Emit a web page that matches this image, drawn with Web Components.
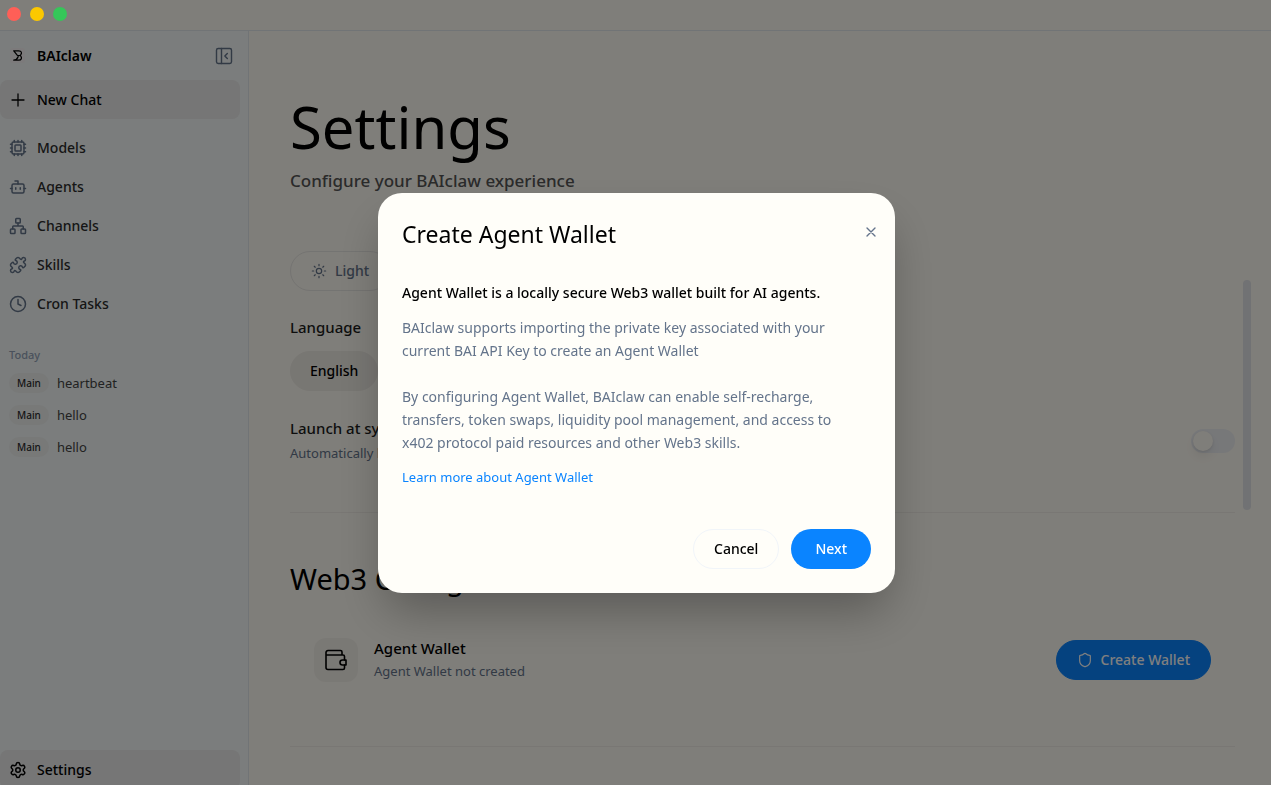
<!DOCTYPE html>
<html lang="en">
<head>
<meta charset="utf-8">
<meta name="viewport" content="width=device-width, initial-scale=1">
<title>BAIclaw</title>
<style>
  :root {
    --page: #fffcf4;
    --surface: #fffef9;
    --sidebar: #f6fbfa;
    --active: #ececec;
    --line: #e2e8ec;
    --ink: #000;
    --text: #2c2c2c;
    --muted: #64748b;
    --blue: #0a84ff;
  }
  body { margin: 0; overflow: hidden; background: var(--page); color: var(--ink);
    font: 500 14px/20px "Noto Sans", "Open Sans", sans-serif; }
</style>
</head>
<body>
<app-window></app-window>
<script>
const ICONS = {
  panel: '<rect x="3" y="3" width="18" height="18" rx="2"/><path d="M9 3v18M16 15l-3-3 3-3"/>',
  plus: '<path d="M4 12h16M12 4v16"/>',
  models: '<rect x="4" y="4" width="16" height="16" rx="2"/><rect x="8" y="8" width="8" height="8" rx="1"/><path d="M12 2v2M7 2v2M17 2v2M12 20v2M7 20v2M17 20v2M2 12h2M2 7h2M2 17h2M20 12h2M20 7h2M20 17h2"/>',
  agents: '<path d="M12 8V4H8"/><rect x="4" y="8" width="16" height="12" rx="2"/><path d="M2 14h2M20 14h2M15 13v2M9 13v2"/>',
  channels: '<rect x="16" y="16" width="6" height="6" rx="1"/><rect x="2" y="16" width="6" height="6" rx="1"/><rect x="9" y="2" width="6" height="6" rx="1"/><path d="M5 16v-3a1 1 0 0 1 1-1h12a1 1 0 0 1 1 1v3M12 12V8"/>',
  skills: '<path d="M15.39 4.39a1 1 0 0 0 1.68-.474 2.5 2.5 0 1 1 3.014 3.015 1 1 0 0 0-.474 1.68l1.683 1.682a2.414 2.414 0 0 1 0 3.414L19.61 15.39a1 1 0 0 1-1.68-.474 2.5 2.5 0 1 0-3.014 3.015 1 1 0 0 1 .474 1.68l-1.683 1.682a2.414 2.414 0 0 1-3.414 0L8.61 19.61a1 1 0 0 0-1.68.474 2.5 2.5 0 1 1-3.014-3.015 1 1 0 0 0 .474-1.68l-1.683-1.682a2.414 2.414 0 0 1 0-3.414L4.39 8.61a1 1 0 0 1 1.68.474 2.5 2.5 0 1 0 3.014-3.015 1 1 0 0 1-.474-1.68l1.683-1.682a2.414 2.414 0 0 1 3.414 0z"/>',
  clock: '<circle cx="12" cy="12" r="10"/><path d="M12 6v6l4 2"/>',
  settings: '<path d="M9.671 4.136a2.34 2.34 0 0 1 4.659 0 2.34 2.34 0 0 0 3.319 1.915 2.34 2.34 0 0 1 2.33 4.033 2.34 2.34 0 0 0 0 3.831 2.34 2.34 0 0 1-2.33 4.033 2.34 2.34 0 0 0-3.319 1.915 2.34 2.34 0 0 1-4.659 0 2.34 2.34 0 0 0-3.32-1.915 2.34 2.34 0 0 1-2.33-4.033 2.34 2.34 0 0 0 0-3.831A2.34 2.34 0 0 1 6.35 6.051a2.34 2.34 0 0 0 3.319-1.915"/><circle cx="12" cy="12" r="3"/>',
  sun: '<circle cx="12" cy="12" r="4"/><path d="M12 2v2M12 20v2M4.93 4.93l1.41 1.41M17.66 17.66l1.41 1.41M2 12h2M20 12h2M6.34 17.66l-1.41 1.41M19.07 4.93l-1.41 1.41"/>',
  shield: '<path d="M20 13c0 5-3.5 7.5-7.66 8.95a1 1 0 0 1-.67-.01C7.5 20.5 4 18 4 13V6a1 1 0 0 1 1-1c2 0 4.500-1.200 6.240-2.720a1.170 1.170 0 0 1 1.520 0C14.510 3.810 17 5 19 5a1 1 0 0 1 1 1z"/>',
  wallet: '<path d="M18 7V4a1.500 1.500 0 0 0-1.500-1.500H4A2 2 0 0 0 2 4.500V19.500a2 2 0 0 0 2 2H19a1.500 1.500 0 0 0 1.500-1.500V17M2 7H19a1.500 1.500 0 0 1 1.500 1.500V12"/><path d="M22 12H18.500a2.500 2.500 0 0 0 0 5H22z"/>',
  close: '<path d="M18 6 6 18M6 6l12 12"/>',
  logo: '<rect width="24" height="24" rx="4" fill="#f8f5f6" stroke="none"/><path d="M6 4.500h8c4.500 0 5.500 3.500 3 6.500-1.500 1.500-3.500 1.500-5.500.5L6 4.500M6 19.500h8c4.500 0 5.500-4 3-7M6 19.500c3.500-.5 6-2.500 7-5.500"/>'
};

function define(name, html) {
  const template = document.createElement('template');
  template.innerHTML = html;
  customElements.define(name, class extends HTMLElement {
    constructor() {
      super();
      this.attachShadow({ mode: 'open' }).append(template.content.cloneNode(true));
    }
  });
}

customElements.define('app-icon', class extends HTMLElement {
  connectedCallback() {
    if (this.shadowRoot) return;
    this.attachShadow({ mode: 'open' }).innerHTML = `
      <style>
        :host { display: block; flex: none; width: var(--icon, 18px); height: var(--icon, 18px); }
        svg { display: block; width: 100%; height: 100%; fill: none; stroke: currentColor;
          stroke-width: var(--stroke, 2); stroke-linecap: round; stroke-linejoin: round; }
      </style>
      <svg viewBox="0 0 24 24" aria-hidden="true">${ICONS[this.getAttribute('name')]}</svg>`;
  }
});

define('title-bar', `
  <style>
    :host { display: flex; align-items: center; height: 30px; padding: 0 7px; border-bottom: 1px solid var(--line); }
    div { display: flex; gap: 9px; position: relative; z-index: 2; padding-bottom: 2px; }
    button { width: 14px; height: 14px; padding: 0; border: 0; border-radius: 50%; background: #ff5f57; }
    .min { background: #fcc800; }
    .max { background: #34c759; }
  </style>
  <div>
    <button aria-label="Close window"></button>
    <button class="min" aria-label="Minimize window"></button>
    <button class="max" aria-label="Zoom window"></button>
  </div>`);

define('nav-item', `
  <style>
    :host { display: block; }
    a { display: flex; align-items: center; gap: 10px; height: 39px; padding: 0 9px;
      border-radius: 8px; color: var(--text); text-decoration: none; }
    slot[name="icon"] { color: var(--muted); }
    :host([active]) a { background: var(--active); color: var(--ink); }
    :host([active]) slot[name="icon"] { color: var(--ink); }
  </style>
  <a href="#"><slot name="icon"></slot><slot></slot></a>`);

define('session-item', `
  <style>
    :host { display: block; }
    a { display: flex; align-items: center; gap: 8px; height: 32px; padding: 0 9px;
      color: #444; font-weight: 400; font-size: 13px; text-decoration: none; }
    span { padding: 0 8px; border-radius: 10px; background: #f0f2f1; color: var(--text); font-size: 10px; font-weight: 500; }
  </style>
  <a href="#"><span>Main</span><slot></slot></a>`);

define('app-sidebar', `
  <style>
    :host { display: flex; flex-direction: column; box-sizing: border-box; padding: 0 8px 0 0;
      background: var(--sidebar); border-right: 1px solid var(--line); }
    header { display: flex; align-items: center; height: 49px; padding: 0 6px 0 10px; }
    header app-icon { --icon: 15px; }
    header b { flex: 1; padding-left: 12px; font-weight: 600; }
    header button { padding: 0; border: 0; background: none; color: var(--muted); }
    header button app-icon { --icon: 20px; --stroke: 1.7; }
    nav { display: flex; flex-direction: column; }
    .new { margin-bottom: 9px; --stroke: 1.7; }
    h2 { margin: 22px 0 2px; padding: 0 9px; color: #94a3b8; font-size: 11px; font-weight: 500; line-height: 20px; }
    .foot { margin: auto 0 -4px; }
  </style>
  <header>
    <app-icon name="logo"></app-icon><b>BAIclaw</b>
    <button aria-label="Collapse sidebar"><app-icon name="panel"></app-icon></button>
  </header>
  <nav aria-label="Main">
    <nav-item class="new" active><app-icon slot="icon" name="plus"></app-icon>New Chat</nav-item>
    <nav-item><app-icon slot="icon" name="models"></app-icon>Models</nav-item>
    <nav-item><app-icon slot="icon" name="agents"></app-icon>Agents</nav-item>
    <nav-item><app-icon slot="icon" name="channels"></app-icon>Channels</nav-item>
    <nav-item><app-icon slot="icon" name="skills"></app-icon>Skills</nav-item>
    <nav-item><app-icon slot="icon" name="clock"></app-icon>Cron Tasks</nav-item>
  </nav>
  <h2>Today</h2>
  <session-item>heartbeat</session-item>
  <session-item>hello</session-item>
  <session-item>hello</session-item>
  <nav-item class="foot" active><app-icon slot="icon" name="settings"></app-icon>Settings</nav-item>`);

define('pill-button', `
  <style>
    :host { display: inline-block; }
    button { display: flex; align-items: center; gap: 8px; box-sizing: border-box; height: 40px; padding: 0 20px;
      border: 1px solid #e9e8e4; border-radius: 20px; background: transparent; color: inherit; font: inherit; white-space: nowrap; }
    :host([kind="primary"]) button { padding: 0 24px; border: 0; background: var(--blue); color: #fff; }
    :host([kind="outline"]) button { border-color: #f1f5f9; }
    :host([kind="wallet"]) button { border-color: var(--blue); background: var(--blue); color: #fff; }
    :host([kind="soft"]) button { padding: 0 19px; border-color: #f1eee7; background: #f1eee7; }
  </style>
  <button type="button"><slot></slot></button>`);

define('toggle-switch', `
  <style>
    :host { display: block; }
    input { appearance: none; display: block; box-sizing: border-box; width: 44px; height: 24px; margin: 0; padding: 2px;
      border-radius: 12px; background: #eef0f3; }
    input::before { content: ""; display: block; width: 20px; height: 20px; border-radius: 50%; background: var(--page);
      box-shadow: 0 6px 10px rgba(0,0,0,.06), 0 1px 3px rgba(0,0,0,.1); }
  </style>
  <input type="checkbox" role="switch" aria-label="Launch at system startup">`);

define('settings-page', `
  <style>
    :host { display: block; position: relative; min-width: 0; padding: 54px 36px 0 41px; overflow: hidden; }
    h1 { margin: 0; font-size: 58px; font-weight: 400; line-height: 84px; }
    .lead { margin: 0 0 58px; color: #555; font-size: 17px; font-weight: 500; line-height: 24px; }
    .theme { display: block; color: var(--muted); }
    h3 { margin: 0; color: #1c1c1c; font-size: 15px; font-weight: 500; line-height: 23px; }
    .lang { margin: 25px 0 12px; }
    .row { display: flex; align-items: center; justify-content: space-between; margin-top: 26px; padding-bottom: 47px; border-bottom: 1px solid #f2efe8; }
    .row h3 { margin-bottom: 2px; }
    p { margin: 0; color: var(--muted); font-size: 13px; font-weight: 400; line-height: 23px; }
    h2 { margin: 44px 0 0; font-size: 29px; font-weight: 400; line-height: 44px; }
    .wallet { display: flex; align-items: center; gap: 16px; padding: 36px 24px 63px; border-bottom: 1px solid #f2efe8; }
    .wallet div { flex: 1; }
    .wallet h3 { color: var(--ink); }
    .tile { display: grid; place-items: center; width: 44px; height: 44px; border-radius: 12px; background: #f5f2eb; --icon: 24px; --stroke: 1.6; }
    i { position: absolute; top: 249px; right: 20px; width: 8px; height: 230px; border-radius: 4px; background: #e2e4e8; }
    pill-button app-icon { --icon: 16px; --stroke: 1.8; }
  </style>
  <h1>Settings</h1>
  <p class="lead">Configure your BAIclaw experience</p>
  <pill-button class="theme"><app-icon name="sun"></app-icon>Light</pill-button>
  <h3 class="lang">Language</h3>
  <pill-button kind="soft">English</pill-button>
  <div class="row">
    <div><h3>Launch at system startup</h3><p>Automatically launch</p></div>
    <toggle-switch></toggle-switch>
  </div>
  <h2>Web3 Configuration</h2>
  <section class="wallet">
    <span class="tile"><app-icon name="wallet"></app-icon></span>
    <div><h3>Agent Wallet</h3><p>Agent Wallet not created</p></div>
    <pill-button kind="wallet"><app-icon name="shield"></app-icon>Create Wallet</pill-button>
  </section>
  <i></i>`);

define('wallet-dialog', `
  <style>
    :host { position: fixed; inset: 0; z-index: 1; display: grid; place-items: center; padding-left: 2px; background: rgba(0,0,0,.5); }
    section { box-sizing: border-box; width: min(517px, 90vw); padding: 24px; border-radius: 24px; background: var(--surface);
      box-shadow: 0 24px 48px -8px rgba(0,0,0,.3); }
    header { display: flex; justify-content: space-between; align-items: center; margin-bottom: 30px; }
    h2 { margin: 0; font-size: 23px; font-weight: 400; line-height: 34px; }
    header button { display: grid; place-items: center; width: 16px; height: 16px; margin: 0 -8px 4px 0; padding: 0; border: 0; background: none; color: var(--muted); --icon: 16px; }
    p { margin: 0; color: var(--muted); font-weight: 400; line-height: 23px; }
    .intro { margin-bottom: 12px; color: var(--ink); font-weight: 500; }
    .body { margin-bottom: 12px; padding-right: 24px; white-space: pre-line; }
    a { display: inline-block; color: var(--blue); font-size: 13px; font-weight: 400; line-height: 23px; text-decoration: none; }
    footer { display: flex; justify-content: flex-end; gap: 12px; margin-top: 40px; }
  </style>
  <section role="dialog" aria-modal="true" aria-labelledby="title">
    <header><h2 id="title">Create Agent Wallet</h2><button aria-label="Close"><app-icon name="close"></app-icon></button></header>
    <p class="intro">Agent Wallet is a locally secure Web3 wallet built for AI agents.</p>
    <p class="body">BAIclaw supports importing the private key associated with your current BAI API Key to create an Agent Wallet

By configuring Agent Wallet, BAIclaw can enable self-recharge, transfers, token swaps, liquidity pool management, and access to x402 protocol paid resources and other Web3 skills.</p>
    <a href="#">Learn more about Agent Wallet</a>
    <footer><pill-button kind="outline">Cancel</pill-button><pill-button kind="primary">Next</pill-button></footer>
  </section>`);

define('app-window', `
  <style>
    :host { display: grid; grid-template: auto minmax(0, 1fr) / 249px minmax(0, 1fr); height: 100vh; overflow: hidden; }
    title-bar { grid-column: 1 / -1; }
  </style>
  <title-bar></title-bar>
  <app-sidebar></app-sidebar>
  <settings-page></settings-page>
  <wallet-dialog></wallet-dialog>`);
</script>
</body>
</html>
